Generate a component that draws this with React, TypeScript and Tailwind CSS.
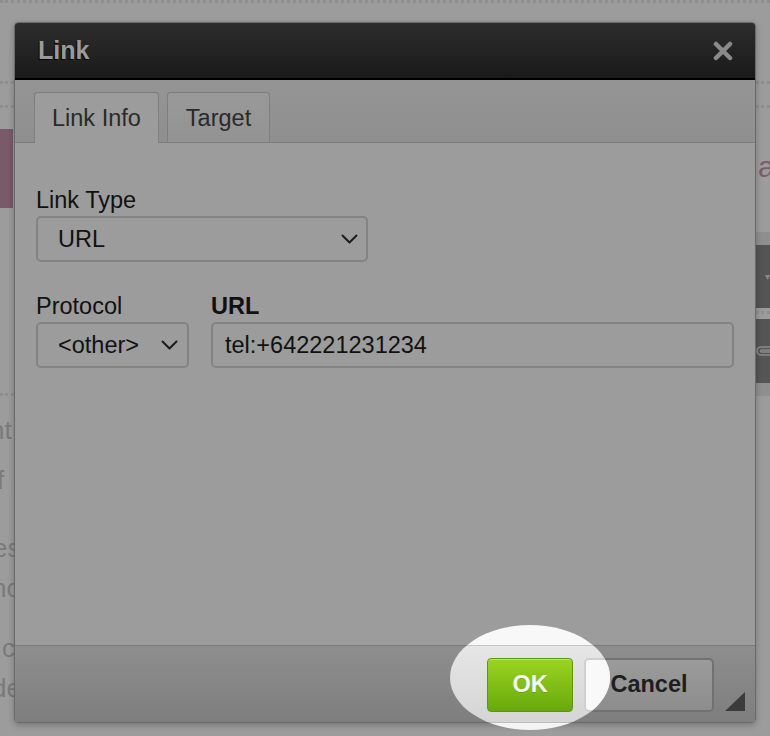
import React from 'react';

const Chevron = () => (
  <svg width="17" height="10" viewBox="0 0 17 10" fill="none">
    <path d="M1.5 1.5 L8.5 8.5 L15.5 1.5" stroke="#1c1c1c" strokeWidth="2" strokeLinecap="round" strokeLinejoin="round" />
  </svg>
);

const Dots = ({ className = '' }: { className?: string }) => (
  <div className={`h-0 border-t-[3px] border-dotted border-[#8e8e8e] ${className}`} />
);

const Backdrop = () => (
  <div className="absolute inset-0 flex text-[#7a7a7a] text-[26px] leading-[40px]">
    <div className="w-[14px] flex flex-col">
      <Dots className="w-full mt-[81px]" />
      <Dots className="w-full mt-[21px]" />
      <div className="w-[13px] h-[79px] mt-[21px] bg-[#785a69]" />
      <Dots className="w-full mt-[185px]" />
      <div className="mt-[14px] -ml-[10px] whitespace-nowrap">nt</div>
      <div className="mt-[10px] -ml-[3px] whitespace-nowrap">f . </div>
      <div className="mt-[28px] -ml-[7px] whitespace-nowrap">es</div>
      <div className="-ml-[8px] whitespace-nowrap">nc</div>
      <div className="mt-[20px] ml-[2px] whitespace-nowrap">co</div>
      <div className="-ml-[8px] whitespace-nowrap">de</div>
    </div>
    <div className="flex-1" />
    <div className="w-[14px] flex flex-col overflow-hidden">
      <Dots className="w-full mt-[81px]" />
      <Dots className="w-full mt-[21px]" />
      <div className="mt-[42px] pl-[2px] text-[#7b5c6b] text-[30px] leading-[34px]">a</div>
      <div className="mt-[48px] h-[13px] bg-[#8f8f8f]" />
      <div className="h-[63px] bg-[#545454] flex items-center justify-end text-[#8a8a8a] text-[10px]">▾</div>
      <Dots className="w-full mt-[3px]" />
      <div className="mt-[5px] h-[64px] bg-[#555555] flex items-center">
        <svg width="14" height="18" viewBox="0 0 14 18" fill="none">
          <path d="M14 5 H5 a4 4 0 0 0 0 8 H14 M14 8 H5.5 a1 1 0 0 0 0 2 H14" stroke="#8c8c8c" strokeWidth="1.6" />
        </svg>
      </div>
      <div className="h-[13px] bg-[#8f8f8f]" />
    </div>
    <div className="absolute left-0 right-0 top-0">
      <Dots className="w-full" />
    </div>
  </div>
);

const Spotlight = () => (
  <div className="absolute left-[450px] top-[625px] w-[160px] h-[105px] z-10 flex flex-col [clip-path:ellipse(50%_50%_at_50%_50%)]">
    <div className="h-[20px] bg-[#f8f8f8]" />
    <div className="h-px bg-[#c6c6c6]" />
    <div className="h-[76px] bg-gradient-to-b from-[#e6e6e6] to-[#d5d5d5] pl-[134px] pt-[12px] overflow-hidden">
      <div className="w-[130px] h-[54px] rounded-[5px] border-2 border-[#d0d0d0] bg-[#f9f9f9]" />
    </div>
    <div className="h-px bg-[#bdbdbd]" />
    <div className="flex-1 bg-[#f4f4f4]" />
  </div>
);

export default function App() {
  return (
    <div className="relative w-[770px] h-[736px] overflow-hidden bg-[#9c9c9c] font-['Liberation_Sans',Arial,sans-serif]">
      <Backdrop />

      <div className="absolute left-[14px] top-[22px] w-[742px] h-[701px] flex flex-col border border-[#6a6a6a] rounded-[4px] overflow-hidden shadow-[0_2px_6px_rgba(0,0,0,0.25)]">
        {/* title */}
        <div className="h-[57px] shrink-0 flex items-center justify-between pl-[23px] pr-[22px] bg-gradient-to-b from-[#2d2d2d] to-[#1a1a1a] border-b-2 border-black">
          <span className="text-[25px] leading-[29px] font-bold text-[#9a9a9a] [text-shadow:-1px_1px_0_#050505]">Link</span>
          <svg width="20" height="20" viewBox="0 0 20 20">
            <path d="M3 3 L17 17 M17 3 L3 17" stroke="#8a8a8a" strokeWidth="4.5" strokeLinecap="round" />
          </svg>
        </div>

        {/* tabs */}
        <div className="h-[63px] shrink-0 flex items-end gap-[8px] pl-[19px] bg-gradient-to-b from-[#959595] to-[#8f8f8f] border-b border-[#7c7c7c]">
          <div className="h-[51px] -mb-px flex items-center px-[17px] rounded-t-[4px] border border-b-0 border-[#7e7e7e] bg-[#9c9c9c] text-[23.5px] leading-[26px] text-[#2a2a2a]">
            Link Info
          </div>
          <div className="h-[50px] flex items-center px-[18px] rounded-t-[4px] border border-b-0 border-[#7e7e7e] bg-gradient-to-b from-[#999999] to-[#939393] text-[23.5px] leading-[26px] text-[#2a2a2a]">
            Target
          </div>
        </div>

        {/* body */}
        <div className="flex-1 bg-[#9c9c9c] px-[21px] pt-[44px] text-[23.5px] leading-[26px] text-[#111]">
          <div>Link Type</div>
          <div className="mt-[3px] w-[332px] h-[46px] flex items-center justify-between pl-[20px] pr-[8px] border-2 border-[#838383] rounded-[5px]">
            <span>URL</span>
            <Chevron />
          </div>

          <div className="mt-[31px] flex gap-[22px]">
            <div className="w-[153px]">
              <div>Protocol</div>
              <div className="mt-[3px] h-[46px] flex items-center justify-between pl-[20px] pr-[9px] border-2 border-[#838383] rounded-[5px]">
                <span>&lt;other&gt;</span>
                <Chevron />
              </div>
            </div>
            <div className="flex-1">
              <div className="font-bold">URL</div>
              <div className="mt-[3px] h-[46px] flex items-center pl-[12px] border-2 border-[#838383] rounded-[5px]">
                tel:+642221231234
              </div>
            </div>
          </div>
        </div>

        {/* footer */}
        <div className="relative h-[77px] shrink-0 flex justify-end gap-[11px] pt-[12px] pr-[41px] border-t border-[#7a7a7a] bg-gradient-to-b from-[#8e8e8e] to-[#7e7e7e]">
          <button className="relative z-20 w-[86px] h-[54px] rounded-[4px] border border-[#5b9811] bg-gradient-to-b from-[#9bd520] to-[#68a80b] shadow-[inset_0_1px_0_rgba(255,255,255,0.35)] text-[23.5px] font-bold text-[#f7f7f7] [text-shadow:0_1px_0_rgba(0,0,0,0.15)]">
            OK
          </button>
          <button className="w-[130px] h-[54px] rounded-[5px] border-2 border-[#717171] bg-gradient-to-b from-[#9b9b9b] to-[#8d8d8d] text-[23.5px] font-bold text-[#1e1e1e]">
            Cancel
          </button>
          <svg className="absolute right-[10px] bottom-[11px]" width="20" height="19" viewBox="0 0 20 19">
            <path d="M20 0 L20 19 L0 19 Z" fill="#3b3b3b" />
          </svg>
        </div>
      </div>

      <Spotlight />
    </div>
  );
}
